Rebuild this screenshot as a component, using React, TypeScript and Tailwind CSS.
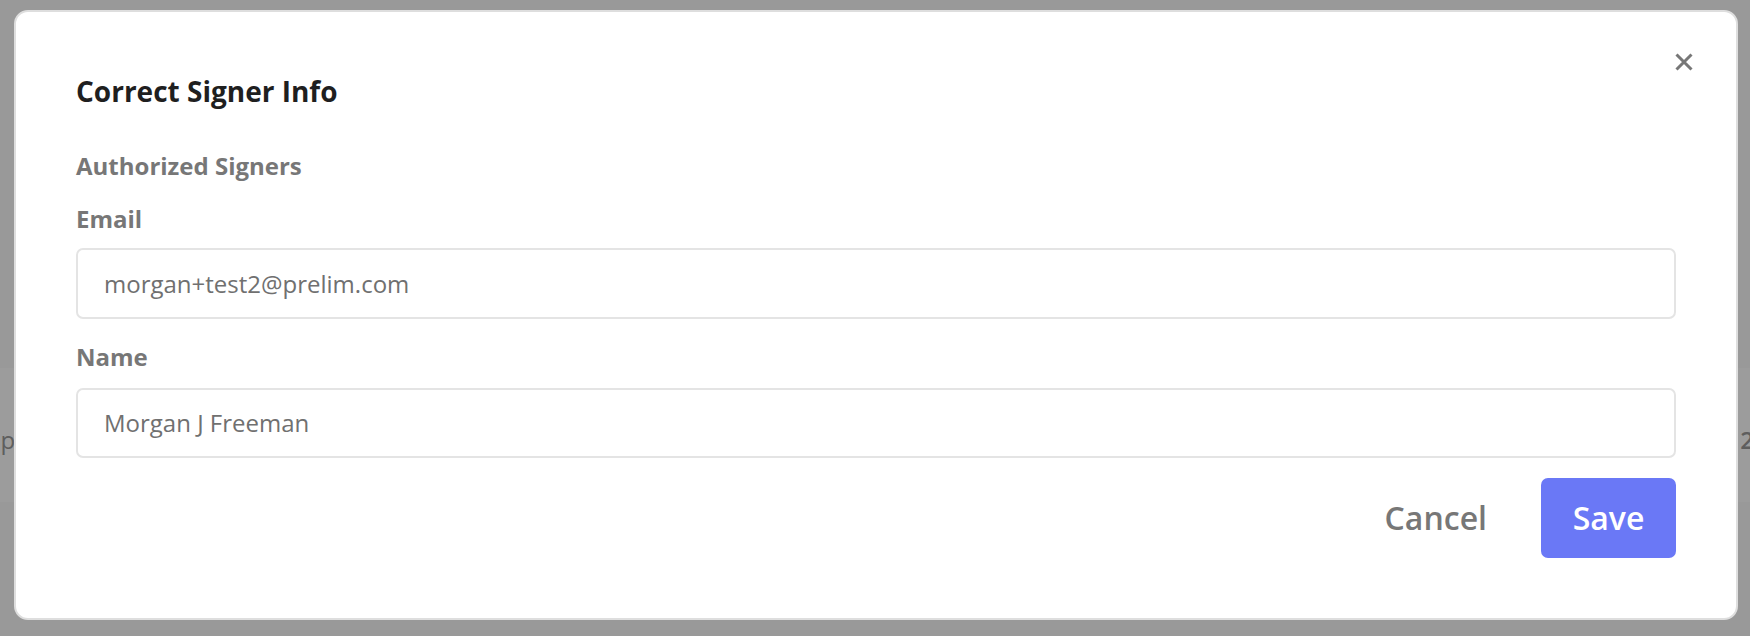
export default function App() {
  return (
    <div
      className="relative h-[636px] w-full overflow-hidden bg-[#999999]"
      style={{ fontFamily: '"Open Sans", "Noto Sans", sans-serif' }}
    >
      {/* page behind the overlay */}
      <div className="mt-[368px] flex h-[134px] items-center justify-between bg-[#9c9c9c] text-[24px] text-[#5e5e5e]">
        <span className="-ml-[14px] pt-[10px]">op</span>
        <span className="-mr-[4px] pt-[10px] font-semibold">12</span>
      </div>

      {/* modal */}
      <div className="absolute inset-0 pl-[14px] pr-[12px] pt-[10px]">
        <div className="relative h-[610px] rounded-[14px] border-2 border-[#dedede] bg-white px-[60px] pt-[62px]">
          <button className="absolute right-[43px] top-[41px] flex h-[18px] w-[18px] items-center justify-center">
            <svg width="18" height="18" viewBox="0 0 18 18" fill="none">
              <path d="M1.5 1.5L16.5 16.5M16.5 1.5L1.5 16.5" stroke="#777777" strokeWidth="3" />
            </svg>
          </button>

          <h2 className="text-[28px] font-bold leading-[34px] text-[#1f1f1f]">Correct Signer Info</h2>

          <div className="mt-[43px] text-[24px] font-bold leading-[30px] text-[#777777]">Authorized Signers</div>

          <label className="mt-[23px] block text-[24px] font-bold leading-[30px] text-[#777777]">Email</label>
          <div className="mt-[14px] flex h-[71px] items-center rounded-[7px] border-2 border-[#e4e4e4] px-[26px] text-[24px] text-[#707070]">
            morgan+test2@prelim.com
          </div>

          <label className="mt-[23px] block text-[24px] font-bold leading-[30px] text-[#777777]">Name</label>
          <div className="mt-[16px] flex h-[70px] items-center rounded-[7px] border-2 border-[#e4e4e4] px-[26px] text-[24px] text-[#707070]">
            Morgan J Freeman
          </div>

          <div className="mt-[20px] flex items-center justify-end gap-[54px]">
            <button className="text-[32px] font-semibold text-[#777777]">Cancel</button>
            <button className="flex h-[80px] w-[135px] items-center justify-center rounded-[7px] bg-[#6a78f6] text-[32px] font-semibold text-white">
              Save
            </button>
          </div>
        </div>
      </div>
    </div>
  );
}
